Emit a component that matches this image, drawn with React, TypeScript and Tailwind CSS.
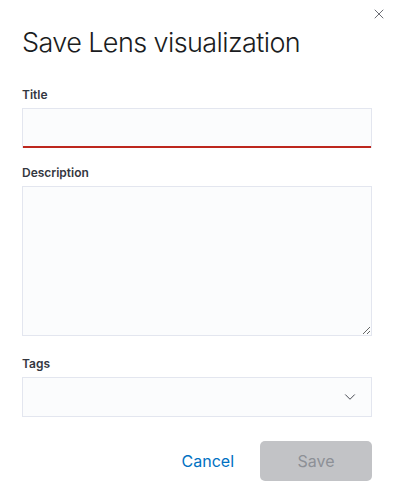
import { X, ChevronDown } from 'lucide-react'

const font = { fontFamily: 'Inter, "Noto Sans", sans-serif' }

export default function App() {
  return (
    <div className="relative min-h-[501px] w-[393px] bg-white pl-[22px] pr-[21px] text-[#343741]"
      style={font}>
      <button className="absolute top-[6px] right-[6px] flex h-[16px] w-[16px] items-center 
        justify-center text-[#343741]">
        <X size={16} strokeWidth={1.1} />
      </button>

      <h1 className="pt-[27px] text-[27px] leading-[32px] font-light tracking-[-0.022em] 
        text-[#1a1c21]">
        Save Lens visualization
      </h1>

      <div className="mt-[27px] flex flex-col">
        <label className="text-[12px] leading-[18px] font-semibold">Title</label>
        <input type="text"
          className="mt-[4px] h-[40px] w-full border border-b-0 border-[#e3e6ef] bg-[#fbfcfd] 
            shadow-[inset_0_-2px_0_#bd271e] outline-none" />
      </div>

      <div className="mt-[16px] flex flex-col">
        <label className="text-[12px] leading-[18px] font-semibold">Description</label>
        <textarea
          className="mt-[4px] h-[150px] w-full resize-y border border-[#e3e6ef] bg-[#fbfcfd] 
            outline-none" />
      </div>

      <div className="mt-[19px] flex flex-col">
        <label className="text-[12px] leading-[18px] font-semibold">Tags</label>
        <div className="mt-[4px] flex h-[40px] w-full items-center justify-end border 
          border-[#e3e6ef] bg-[#fbfcfd] pr-[12px]">
          <ChevronDown size={18} strokeWidth={1.2} className="text-[#343741]" />
        </div>
      </div>

      <div className="mt-[24px] flex items-center justify-end gap-[14px]">
        <button className="h-[40px] px-[12px] text-[16px] text-[#0071c2]">Cancel</button>
        <button className="h-[40px] w-[112px] rounded-[5px] bg-[#c2c3c6] text-[16px] 
          text-[#8d9096]">
          Save
        </button>
      </div>
    </div>
  )
}
